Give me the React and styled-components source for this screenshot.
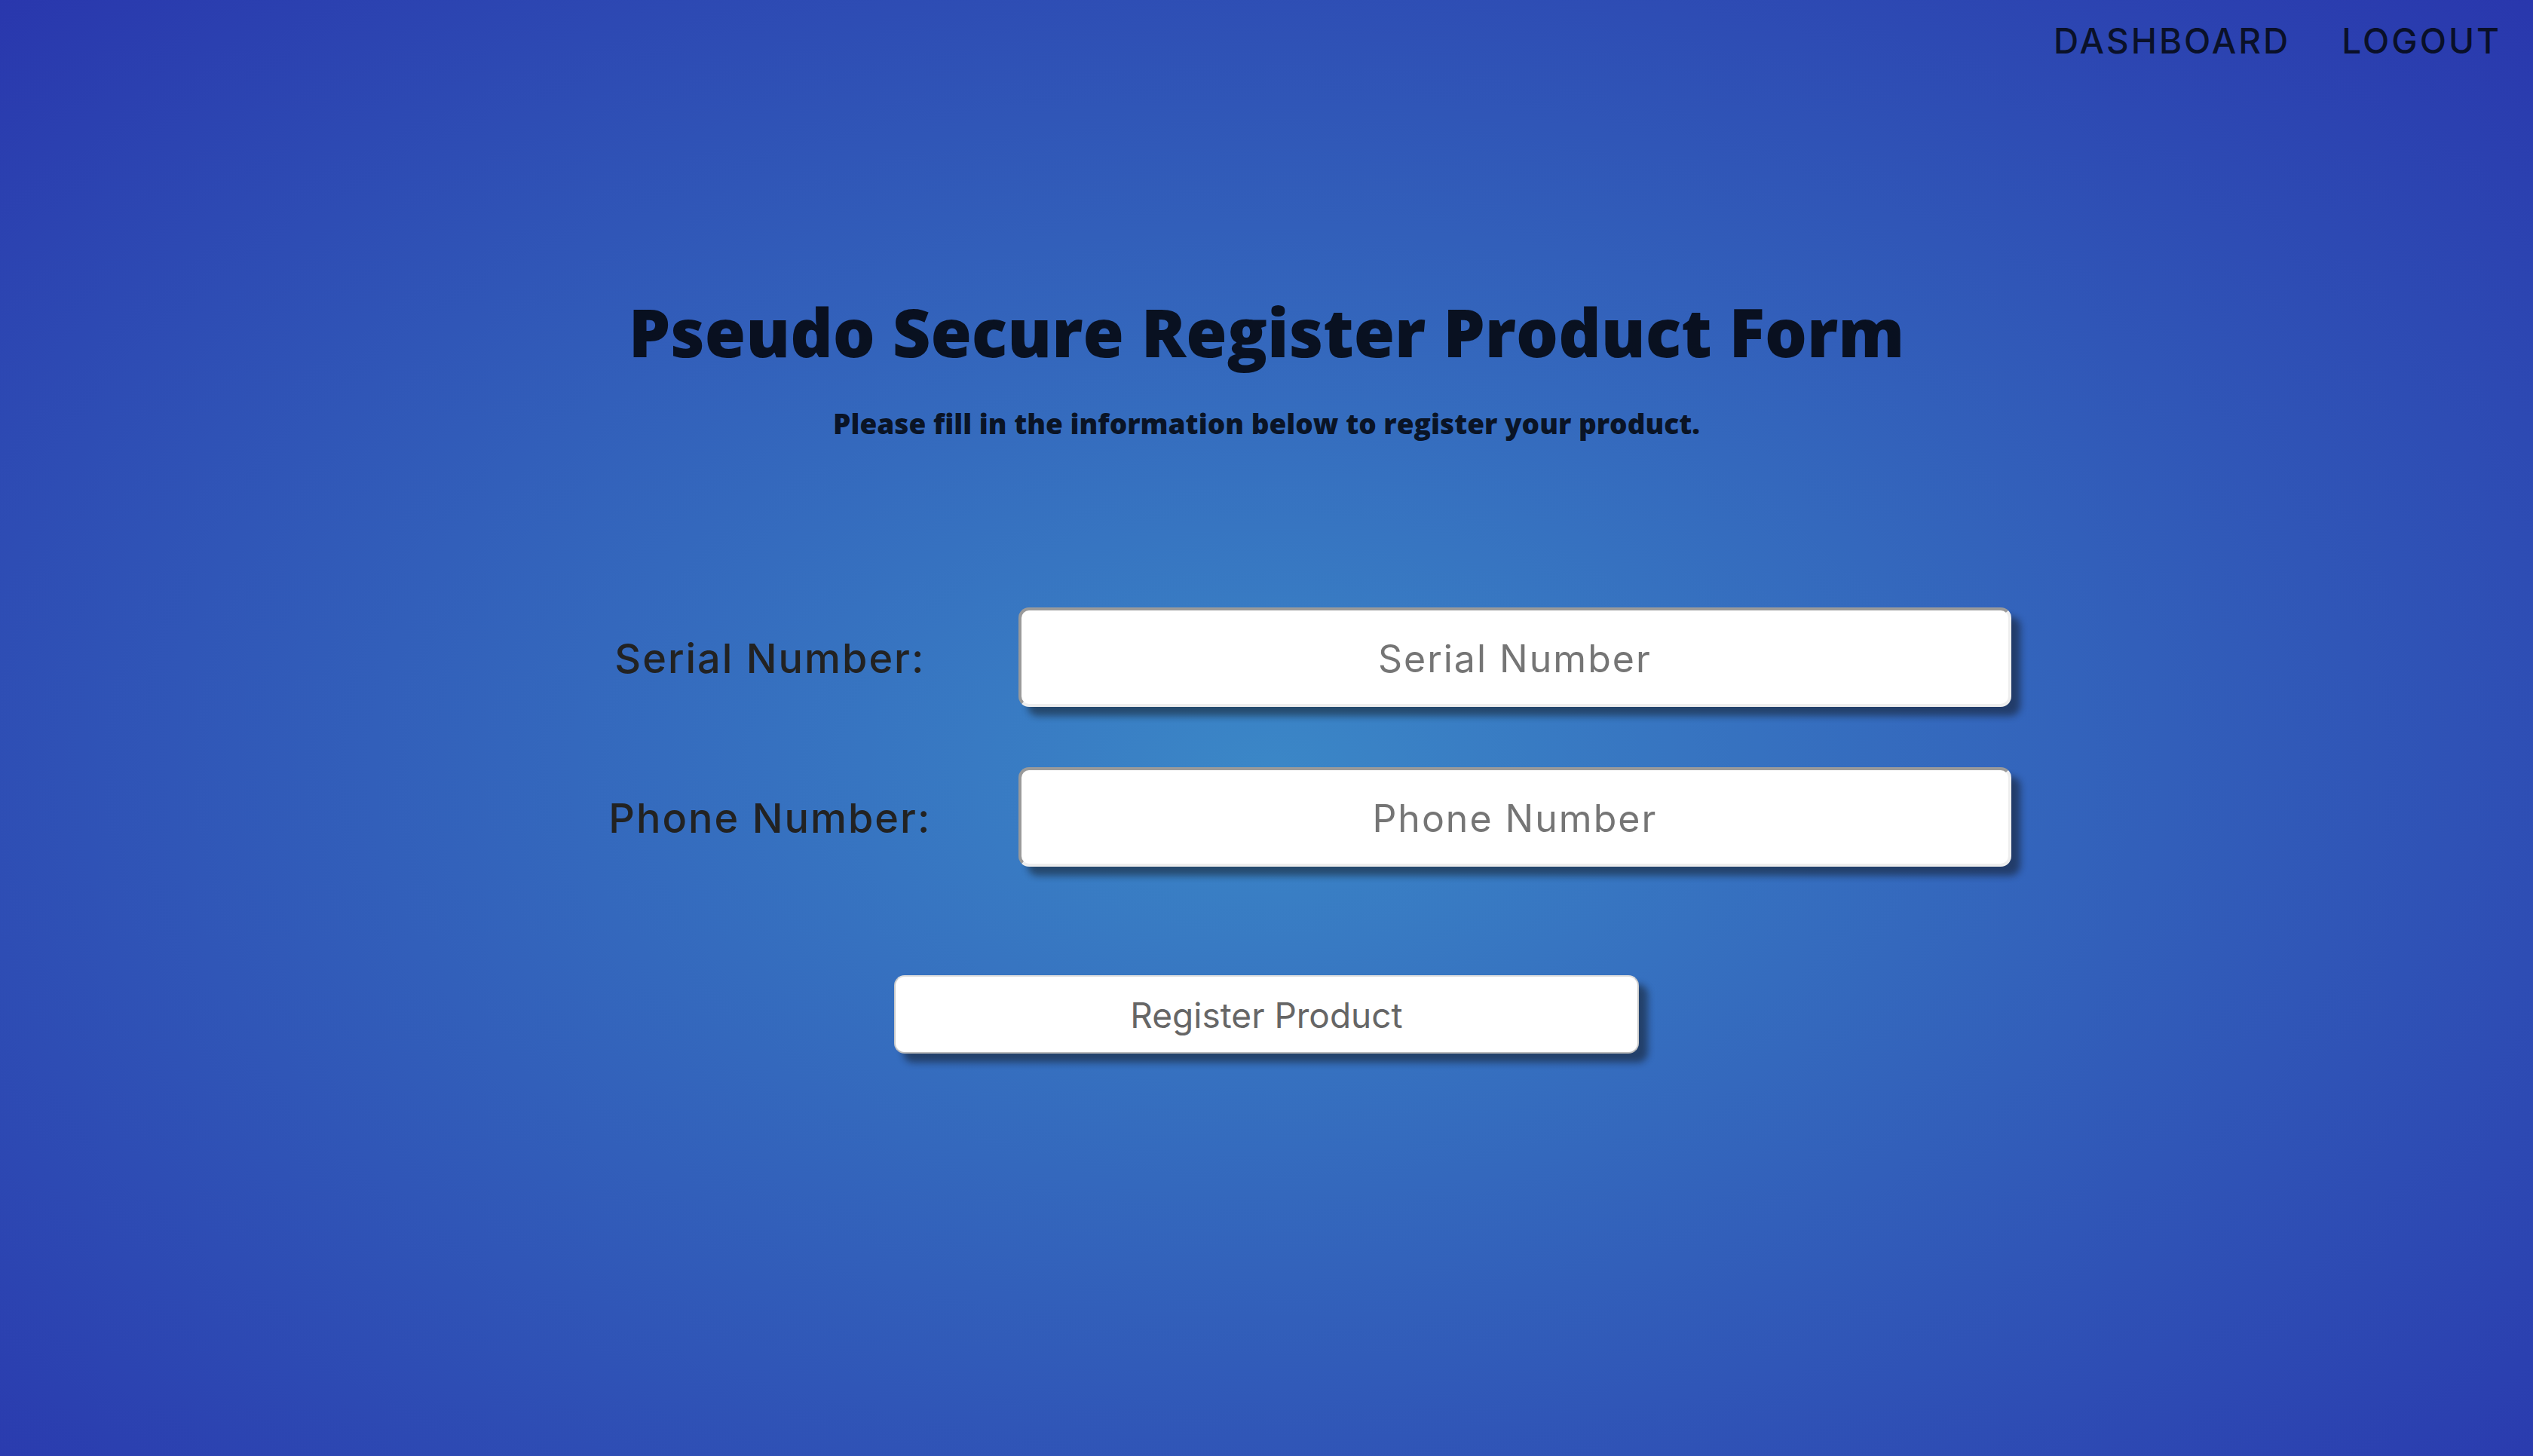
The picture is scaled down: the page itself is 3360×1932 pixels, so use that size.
import React from 'react';
import styled, { createGlobalStyle } from 'styled-components';

const GlobalStyle = createGlobalStyle`
  *, *::before, *::after {
    box-sizing: border-box;
  }

  body {
    margin: 0;
    font-family: Inter, sans-serif;
  }
`;

const Page = styled.div`
  display: flex;
  flex-direction: column;
  min-height: 100vh;
  background: radial-gradient(at 50% 53%, #3b87c7, #2937ad);
`;

const Nav = styled.nav`
  display: flex;
  justify-content: flex-end;
  gap: 68px;
  padding: 22px 42px;
`;

const NavLink = styled.a`
  color: rgba(4, 8, 16, 0.85);
  font-size: 46px;
  font-weight: 500;
  line-height: 64px;
  letter-spacing: 3px;
  text-decoration: none;
  text-transform: uppercase;
`;

const Main = styled.main`
  display: flex;
  flex-direction: column;
  align-items: center;
  padding: 272px 40px 80px;
`;

const Intro = styled.header`
  display: flex;
  flex-direction: column;
  gap: 36px;
  color: rgba(4, 8, 16, 0.9);
  font-family: 'Open Sans', 'Noto Sans', sans-serif;
  text-align: center;
`;

const Title = styled.h1`
  margin: 0;
  font-size: 88px;
  font-weight: 800;
  line-height: 120px;
`;

const Subtitle = styled.h2`
  margin: 0;
  font-size: 37px;
  font-weight: 800;
  line-height: 52px;
`;

const Form = styled.form`
  display: flex;
  flex-direction: column;
  align-items: center;
  gap: 144px;
  width: 100%;
  max-width: 1976px;
  margin-top: 218px;
`;

const Fields = styled.div`
  display: flex;
  flex-direction: column;
  gap: 80px;
  width: 100%;
`;

const Field = styled.div`
  display: grid;
  grid-template-columns: 1fr 2fr;
  align-items: center;
`;

const Label = styled.label`
  padding-top: 4px;
  color: #222;
  font-size: 54px;
  font-weight: 500;
  line-height: 80px;
  letter-spacing: 2px;
  text-align: center;
`;

const TextInput = styled.input`
  width: 100%;
  height: 132px;
  padding: 4px 4px 0;
  border: 4px solid;
  border-color: #9a9a9a #eee #eee #9a9a9a;
  border-radius: 14px;
  background: #fff;
  box-shadow: 12px 12px 10px rgba(16, 16, 16, 0.48);
  color: #222;
  font-family: inherit;
  font-size: 50px;
  letter-spacing: 2px;
  text-align: center;

  &::placeholder {
    color: #757575;
    opacity: 1;
  }
`;

const SubmitButton = styled.button`
  width: 50%;
  height: 104px;
  padding: 2px 0 0;
  border: 2px solid;
  border-color: #ddd #ccc #bbb #ccc;
  border-radius: 14px;
  background: #fff;
  box-shadow: 12px 12px 10px rgba(16, 16, 16, 0.48);
  color: #666;
  font-family: inherit;
  font-size: 46px;
  cursor: pointer;
`;

const fields = [
  { id: 'serial-number', label: 'Serial Number', type: 'text' },
  { id: 'phone-number', label: 'Phone Number', type: 'tel' },
];

export default function App() {
  return (
    <Page>
      <GlobalStyle />
      <Nav>
        <NavLink href="#dashboard">Dashboard</NavLink>
        <NavLink href="#logout">Logout</NavLink>
      </Nav>
      <Main>
        <Intro>
          <Title>Pseudo Secure Register Product Form</Title>
          <Subtitle>Please fill in the information below to register your product.</Subtitle>
        </Intro>
        <Form onSubmit={(event) => event.preventDefault()}>
          <Fields>
            {fields.map(({ id, label, type }) => (
              <Field key={id}>
                <Label htmlFor={id}>{label}:</Label>
                <TextInput id={id} name={id} type={type} placeholder={label} />
              </Field>
            ))}
          </Fields>
          <SubmitButton type="submit">Register Product</SubmitButton>
        </Form>
      </Main>
    </Page>
  );
}
